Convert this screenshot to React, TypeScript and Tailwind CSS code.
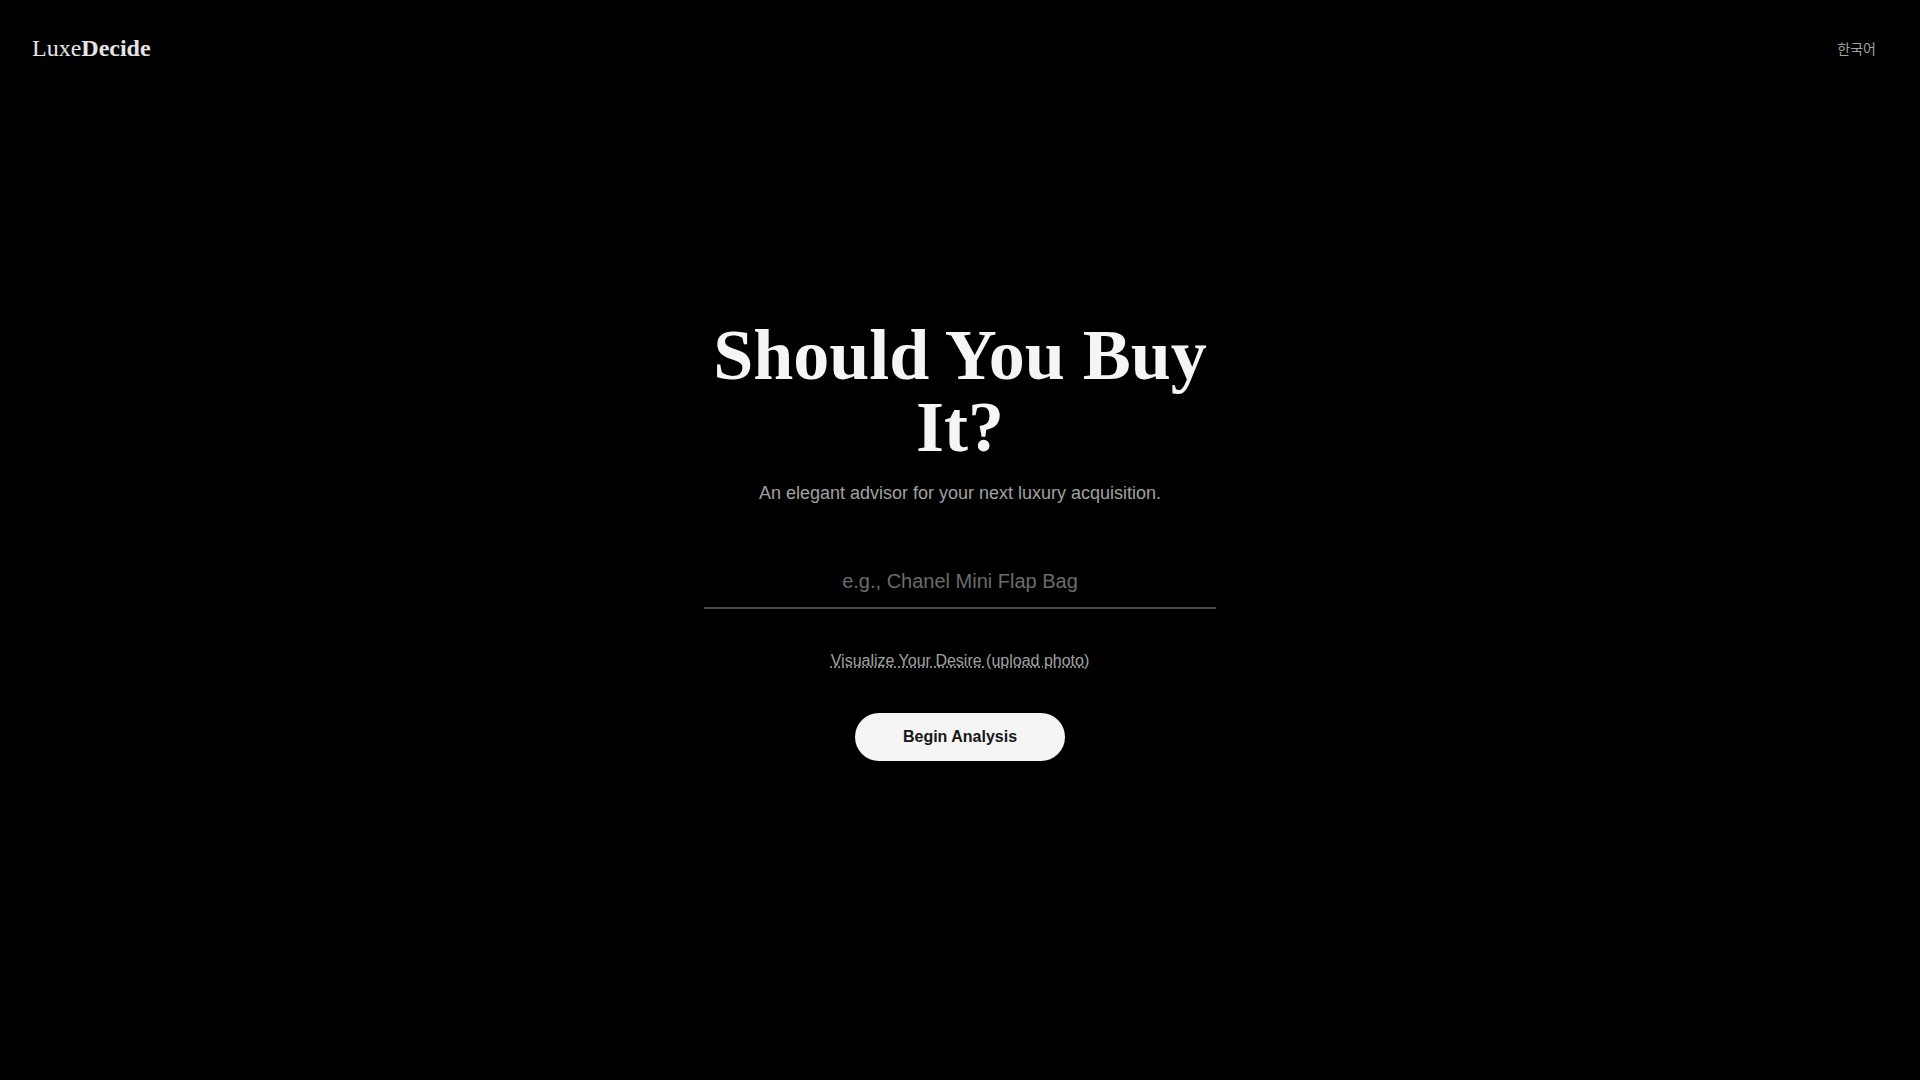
import React from "react";

export default function App() {
  return (
    <div
      className="min-h-screen w-full bg-black flex flex-col"
      style={{ fontFamily: '"Liberation Sans", Arial, sans-serif' }}
    >
      <header className="h-24 px-8 flex items-center justify-between">
        <div className="text-2xl text-neutral-200 font-['Liberation_Serif',_'Times_New_Roman',_serif]">
          <span className="font-normal">Luxe</span>
          <span className="font-bold">Decide</span>
        </div>
        <button className="px-3 py-1 text-sm text-neutral-400 font-['Noto_Sans_CJK_KR',_'Noto_Sans',_sans-serif]">
          한국어
        </button>
      </header>

      <main className="flex-1 flex items-center justify-center">
        <div className="w-full max-w-lg flex flex-col items-center text-center">
          <h1 className="text-7xl leading-none font-bold text-[#f5f5f5] font-['Liberation_Serif',_'Times_New_Roman',_serif]">
            Should You Buy It?
          </h1>
          <p className="mt-4 text-lg text-neutral-400">
            An elegant advisor for your next luxury acquisition.
          </p>
          <input
            type="text"
            placeholder="e.g., Chanel Mini Flap Bag"
            className="mt-12 w-full bg-transparent text-center text-xl py-3 text-neutral-100 placeholder:text-[#6b6b6b] border-b-2 border-[#4a4a4a] outline-none"
          />
          <button className="mt-10 text-base text-neutral-400 underline decoration-dotted">
            Visualize Your Desire (upload photo)
          </button>
          <button className="mt-10 px-12 py-3 rounded-full bg-[#f5f5f5] text-neutral-900 font-bold text-base">
            Begin Analysis
          </button>
        </div>
      </main>

      <div className="h-24" />
    </div>
  );
}
